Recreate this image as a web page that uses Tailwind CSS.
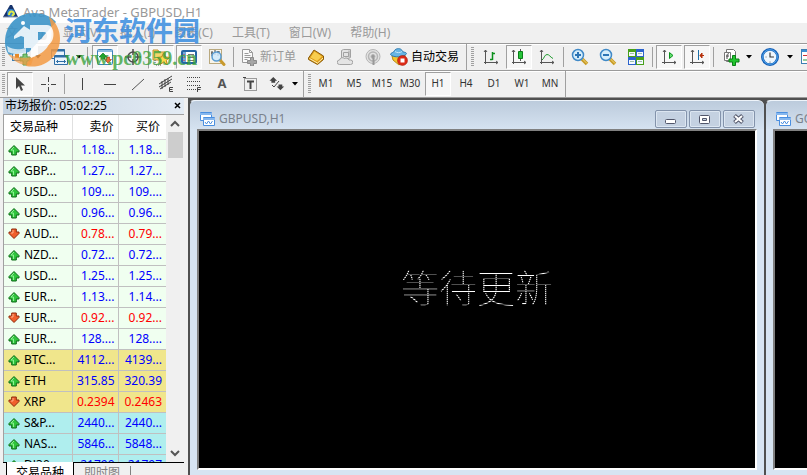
<!DOCTYPE html>
<html lang="zh-CN">

<head>
    <title>Ava MetaTrader - GBPUSD,H1</title>
    <meta charset="UTF-8">
    <meta name="viewport" content="width=device-width, initial-scale=1.0">
    <script src="https://cdn.jsdelivr.net/npm/@tailwindcss/browser@4"></script>
    <script type="text/javascript">
        const quotes = [
            ['EUR...', '1.18...', '1.18...', 'up', 'fx'],
            ['GBP...', '1.27...', '1.27...', 'up', 'fx'],
            ['USD...', '109....', '109....', 'up', 'fx'],
            ['USD...', '0.96...', '0.96...', 'up', 'fx'],
            ['AUD...', '0.78...', '0.79...', 'down', 'fx'],
            ['NZD...', '0.72...', '0.72...', 'up', 'fx'],
            ['USD...', '1.25...', '1.25...', 'up', 'fx'],
            ['EUR...', '1.13...', '1.14...', 'up', 'fx'],
            ['EUR...', '0.92...', '0.92...', 'down', 'fx'],
            ['EUR...', '128....', '128....', 'up', 'fx'],
            ['BTC...', '4112...', '4139...', 'up', 'crypto'],
            ['ETH', '315.85', '320.39', 'up', 'crypto'],
            ['XRP', '0.2394', '0.2463', 'down', 'crypto'],
            ['S&amp;P...', '2440...', '2440...', 'up', 'index'],
            ['NAS...', '5846...', '5848...', 'up', 'index'],
            ['DJ30...', '21790', '21797', 'up', 'index'],
        ]

        const rowColors = { fx: 'bg-[#f0fff0]', crypto: 'bg-[#f0e68c]', index: 'bg-[#afeeee]' }

        const arrows = {
            up: '<svg class="w-3 h-3" viewBox="0 0 12 12"><path d="M6 1.5 11 6.5V8H8.300v3H3.700V8H1V6.500Z" fill="#2fc43c" stroke="#0c6a16"/><path d="M6 3 3 6h2.500v4" fill="none" stroke="#8df093"/></svg>',
            down: '<svg class="w-3 h-3" viewBox="0 0 12 12"><path d="M6 10.500 1 5.500V4h2.700V1h4.600v3H11v1.500Z" fill="#f0602c" stroke="#8e2a0c"/><path d="M5 2v3H3" fill="none" stroke="#ffb08a"/></svg>'
        }

        window.onload = () => {
            document.getElementById('quotes').innerHTML = quotes.map((q) => `
                <tr class="h-[21px] border-b border-[#c0c0c0] ${rowColors[q[4]]}">
                    <td class="border-r border-[#c0c0c0] pl-1"><div class="flex items-center gap-1">${arrows[q[3]]}<span>${q[0]}</span></div></td>
                    <td class="border-r border-[#c0c0c0] pr-[3px] text-right ${q[3] === 'up' ? 'text-[#0000ff]' : 'text-[#ff0000]'}">${q[1]}</td>
                    <td class="pr-1 text-right ${q[3] === 'up' ? 'text-[#0000ff]' : 'text-[#ff0000]'}">${q[2]}</td>
                </tr>`).join('')
        }
    </script>
</head>

<body class="flex h-screen flex-col overflow-hidden bg-[#f0f0f0] font-['Noto_Sans','Noto_Sans_CJK_SC',sans-serif] text-xs text-black">

    <!-- title bar -->
    <header class="flex h-[23px] shrink-0 items-center gap-1 bg-white pl-[3px] text-[#999]">
        <svg class="h-4 w-4" viewBox="0 0 16 16">
            <path d="M7 1h2l6 12H0Z" fill="#17336b" />
            <circle cx="8" cy="9" r="4" fill="#2f7fc9" />
            <path d="M6 11c0-4 4-5 5-1l-2 2" fill="none" stroke="#dfe84a" stroke-width="2" />
            <path d="M0 13h15" stroke="#8a95b0" />
        </svg>
        <h1 class="text-[13px] leading-4">Ava MetaTrader - GBPUSD,H1</h1>
    </header>

    <!-- menu -->
    <nav class="flex h-5 shrink-0 items-center gap-[19px] whitespace-nowrap pl-1.5 text-[#9a9a9a]">
        <a href="#">文件(F)</a>
        <a href="#">显示(V)</a>
        <a href="#">插入(I)</a>
        <a href="#">图表(C)</a>
        <a href="#">工具(T)</a>
        <a href="#">窗口(W)</a>
        <a href="#">帮助(H)</a>
    </nav>

    <!-- standard toolbar -->
    <div class="flex h-[27px] shrink-0 items-center gap-0.5 overflow-hidden whitespace-nowrap border-t border-[#9a9a9a] pl-0.5 shadow-[inset_0_1px_0_#fff]">
        <span class="h-5 w-[3px] shrink-0 bg-[repeating-linear-gradient(#a0a0a0_0_1px,transparent_1px_2px)]"></span>
        <button aria-label="新图表" class="flex h-6 w-[35px] shrink-0 items-center justify-between pl-1">
            <svg class="h-5 w-5" viewBox="0 0 20 20">
                <rect x="1.500" y="3.500" width="14" height="10" fill="#e9f3fa" stroke="#3c7fb4" />
                <path d="M4 6h4v5H4z" fill="#e58a28" />
                <path d="M9 7h3v-3h4v3h3v4h-3v4h-4v-4H9z" transform="translate(0 3)" fill="#7cc576" stroke="#4b9b48" />
            </svg>
            <svg class="h-1 w-2" viewBox="0 0 8 4"><path d="M1 0h6L4 3.500z" /></svg>
        </button>
        <button aria-label="配置文件" class="ml-1 flex h-6 w-[35px] shrink-0 items-center justify-between pl-0.5">
            <svg class="h-[18px] w-[18px]" viewBox="0 0 18 18" fill="#eaf4fc" stroke="#2f6ea6">
                <path d="M1.500 1.500h13v9h-13z" /><path d="M1 2.500h14" stroke-width="2" />
                <path d="M4.500 7.500h13v9h-13z" /><path d="M4 8.500h14" stroke-width="2" />
                <path d="M6.500 13.500h9M8 12l-1.500 1.500L8 15M14 12l1.500 1.500L14 15" fill="none" />
            </svg>
            <svg class="h-1 w-2" viewBox="0 0 8 4"><path d="M1 0h6L4 3.500z" /></svg>
        </button>
        <span class="mx-0.5 h-5 w-px shrink-0 bg-[#a0a0a0]"></span>
        <button aria-label="市场报价" class="flex h-6 w-[26px] shrink-0 items-center justify-center border border-b-white border-r-white border-l-[#a0a0a0] border-t-[#a0a0a0] bg-[#f7f7f7]">
            <svg class="h-4 w-4" viewBox="0 0 16 16">
                <rect x=".5" y=".5" width="15" height="15" rx="1" fill="#fff" stroke="#3c83bd" />
                <path d="M1 1h14v2H1z" fill="#8dbde0" />
                <path d="M6 4l4 4H8v2H4V8H2z" fill="#1da52b" stroke="#0b6915" stroke-width=".6" />
                <path d="M11 14 7.500 10.500h2V8h3v2.500h2z" fill="#ee6a35" stroke="#9c300d" stroke-width=".6" />
            </svg>
        </button>
        <button aria-label="数据窗口" class="flex h-6 w-[26px] shrink-0 items-center justify-center">
            <svg class="h-4 w-4" viewBox="0 0 16 16" fill="none" stroke="#4c4c4c">
                <circle cx="8" cy="8" r="5" stroke-width="1.500" /><path d="M8 0v6M8 10v6M0 8h6M10 8h6" stroke-width="1.500" />
            </svg>
        </button>
        <button aria-label="导航" class="flex h-6 w-[26px] shrink-0 items-center justify-center border border-b-white border-r-white border-l-[#a0a0a0] border-t-[#a0a0a0] bg-[#f7f7f7]">
            <svg class="h-[18px] w-[18px]" viewBox="0 0 18 18">
                <path d="M1 2h5l1 2h6v8H1z" fill="#f5d66a" stroke="#c0902c" />
                <path d="M3 12v5h6" fill="none" stroke="#555" stroke-dasharray="1 1" />
                <path d="m11.500 5 1.800 4 4.200.4-3.200 2.900 1 4.200-3.800-2.200-3.800 2.200 1-4.200-3.200-2.900 4.200-.4z" fill="#ffd94a" stroke="#b78316" />
            </svg>
        </button>
        <button aria-label="终端" class="flex h-6 w-[26px] shrink-0 items-center justify-center border border-b-white border-r-white border-l-[#a0a0a0] border-t-[#a0a0a0] bg-[#f7f7f7]">
            <svg class="h-4 w-4" viewBox="0 0 16 16">
                <rect x="1" y="2" width="14" height="12" rx="1" fill="#fff" stroke="#2565a4" stroke-width="2" />
                <path d="M2 3h3v10H2z" fill="#72a8dc" /><path d="M7 5.500h6M7 8.500h6M7 11.500h6" stroke="#777" />
                <path d="M3 5v1M3 8v1M3 11v1" stroke="#d33" />
            </svg>
        </button>
        <button aria-label="策略测试" class="flex h-6 w-[26px] shrink-0 items-center justify-center">
            <svg class="h-[18px] w-[18px]" viewBox="0 0 18 18">
                <rect x="1.500" y="1.500" width="12" height="14" fill="#f8f4ea" stroke="#b9a97f" />
                <path d="M4 3v5M7 2v5M10 3v5M3 5h2M9 4h3" stroke="#444" />
                <path d="m12 12 4 4.500" stroke="#c89a2e" stroke-width="3" stroke-linecap="round" />
                <circle cx="8.500" cy="8.500" r="4.500" fill="#cfe9fb" fill-opacity=".85" stroke="#5a9cd2" stroke-width="1.500" />
            </svg>
        </button>
        <span class="mx-px h-5 w-px shrink-0 bg-[#a0a0a0]"></span>
        <button class="ml-0.5 flex h-6 w-[62px] shrink-0 items-center gap-[3px] pl-0.5 text-[#999]">
            <svg class="h-[18px] w-4" viewBox="0 0 16 18">
                <path d="M1.500 1.500h7l3 3v10h-10z" fill="#fafafa" stroke="#9a9a9a" />
                <path d="M8.500 1.500v3h3M3.500 5.500h4M3.500 7.500h6M3.500 9.500h6M3.500 11.500h3" fill="none" stroke="#9a9a9a" />
                <path d="M9.500 9.500h3v3h3v3h-3v2.500h-3v-2.500h-3v-3h3z" fill="#a6a6a6" stroke="#8a8a8a" />
            </svg>新订单</button>
        <button aria-label="MetaEditor" class="flex h-6 w-[26px] shrink-0 items-center justify-center">
            <svg class="h-4 w-4" viewBox="0 0 16 16">
                <path d="M0.500 9 6 1l9.500 6v3.500l-6 5-9-5z" fill="#dd9a15" stroke="#8a5c0a" />
                <path d="m1.500 9.500 8 4.500 5.500-5" fill="none" stroke="#fff2b8" /><path d="m2.500 8.500 4-6 7.500 5-5 4.500z" fill="#f8cd4e" />
            </svg>
        </button>
        <button aria-label="市场" class="ml-px flex h-6 w-[26px] shrink-0 items-center justify-center">
            <svg class="h-4 w-4" viewBox="0 0 16 16" fill="#e4e4e4" stroke="#a2a2a2">
                <path d="m4.500 1.500 2-1h7v8l-2 1h-7z" /><path d="M6.500 3.500h5v4h-5zM12 1.500v7" />
                <path d="M2.500 15.500a2 2 0 0 1 0-4.500 3 3 0 0 1 5-1.500 3 3 0 0 1 4.500 1.500h1.500a2 2 0 0 1 0 4.500z" />
            </svg>
        </button>
        <button aria-label="信号" class="flex h-6 w-[26px] shrink-0 items-center justify-center">
            <svg class="h-4 w-4" viewBox="0 0 16 16" fill="none" stroke="#b5b5b5">
                <circle cx="8" cy="7.500" r="7" fill="#e2e2e2" /><circle cx="8" cy="7.500" r="4.500" stroke-width="1.500" /><circle cx="8" cy="7.500" r="2" fill="#999" />
                <path d="M8.500 9v7" stroke="#999" stroke-width="2" />
            </svg>
        </button>
        <button class="ml-0.5 flex h-6 w-[74px] shrink-0 items-center gap-[3px]">
            <svg class="h-[18px] w-[18px]" viewBox="0 0 18 18">
                <path d="m2 8 13-1v5l-6 5-6-5z" fill="#f1c530" stroke="#b98c16" />
                <path d="M.500 6.500C1 4 4 5 4.500 2.500 6 0 11 0 12 2.500 12.500 5 16 3.500 16.500 5.500 15 9.500 3 10 .500 6.500Z" fill="#67b5e4" stroke="#2e7bb0" />
                <path d="M5 3.500c2 1.500 5 1.500 7 0" fill="none" stroke="#c5e6f8" />
                <circle cx="12.500" cy="12.500" r="5" fill="#dd2b17" stroke="#a11505" stroke-width=".5" /><path d="M10.500 10.500h4v4h-4z" fill="#fff" />
            </svg>自动交易</button>
        <span class="h-full w-px shrink-0 bg-[#a0a0a0]"></span>
        <span class="mx-0.5 h-5 w-[3px] shrink-0 bg-[repeating-linear-gradient(#a0a0a0_0_1px,transparent_1px_2px)]"></span>
        <button aria-label="柱状图" class="flex h-6 w-[26px] shrink-0 items-center justify-center">
            <svg class="h-4 w-4" viewBox="0 0 16 16" fill="none" stroke="#555">
                <path d="M2.500 1v14M1 3l1.500-2L4 3M1 13.500h14M13 12l2 1.500-2 1.500" /><path d="M9.500 3v8M7 10.500h2.500M9.500 4.500H12" stroke="#0b8f1c" stroke-width="1.500" />
            </svg>
        </button>
        <button aria-label="阴阳烛" class="flex h-6 w-[26px] shrink-0 items-center justify-center border border-b-white border-r-white border-l-[#a0a0a0] border-t-[#a0a0a0] bg-[#f7f7f7]">
            <svg class="h-4 w-4" viewBox="0 0 16 16" fill="none" stroke="#555">
                <path d="M2.500 1v14M1 3l1.500-2L4 3M1 13.500h14M13 12l2 1.500-2 1.500M9.500 0v12" /><path d="M7.500 2.500h4v7h-4z" fill="#26c43a" stroke="#0b7e19" />
            </svg>
        </button>
        <button aria-label="折线图" class="flex h-6 w-[26px] shrink-0 items-center justify-center">
            <svg class="h-4 w-4" viewBox="0 0 16 16" fill="none" stroke="#555">
                <path d="M2.500 1v14M1 3l1.500-2L4 3M1 13.500h14M13 12l2 1.500-2 1.500" /><path d="M3 11c2-1 2.500-5.500 5-5.500S11 8 14 9.500" stroke="#1c9a2b" />
            </svg>
        </button>
        <span class="mx-px h-5 w-px shrink-0 bg-[#a0a0a0]"></span>
        <button aria-label="放大" class="flex h-6 w-[26px] shrink-0 items-center justify-center">
            <svg class="h-[18px] w-[18px]" viewBox="0 0 18 18">
                <path d="m11 11 5 5" stroke="#c79a26" stroke-width="3.500" /><path d="m11.500 11 4.500 4.500" stroke="#f6dc7c" />
                <circle cx="7" cy="7" r="5.500" fill="#d5edfb" stroke="#4089c7" stroke-width="1.500" /><path d="M4 7h6M7 4v6" stroke="#2c74b5" stroke-width="2" />
            </svg>
        </button>
        <button aria-label="缩小" class="flex h-6 w-[26px] shrink-0 items-center justify-center">
            <svg class="h-[18px] w-[18px]" viewBox="0 0 18 18">
                <path d="m11 11 5 5" stroke="#c79a26" stroke-width="3.500" /><path d="m11.500 11 4.500 4.500" stroke="#f6dc7c" />
                <circle cx="7" cy="7" r="5.500" fill="#d5edfb" stroke="#4089c7" stroke-width="1.500" /><path d="M4 7h6" stroke="#2c74b5" stroke-width="2" />
            </svg>
        </button>
        <button aria-label="平铺窗口" class="flex h-6 w-[26px] shrink-0 items-center justify-center">
            <svg class="h-4 w-4" viewBox="0 0 16 16">
                <path d="M0 0h8v8H0zM8 8h8v8H8z" fill="#47a01a" /><path d="M8 0h8v8H8zM0 8h8v8H0z" fill="#2b63cd" />
                <path d="M1 3h6v4H1zM9 3h6v4H9zM1 11h6v4H1zM9 11h6v4H9z" fill="#f4f8ff" />
                <path d="M2 4.500h4M10 4.500h4M2 12.500h4M10 12.500h4" stroke="#9ec0ac" />
            </svg>
        </button>
        <span class="mx-px h-5 w-px shrink-0 bg-[#a0a0a0]"></span>
        <button aria-label="自动滚动" class="flex h-6 w-[26px] shrink-0 items-center justify-center border border-b-white border-r-white border-l-[#a0a0a0] border-t-[#a0a0a0] bg-[#f7f7f7]">
            <svg class="h-4 w-4" viewBox="0 0 16 16" fill="none" stroke="#555">
                <path d="M3.500 1v14M2 3l1.500-2L5 3M1 13.500h14M13 12l2 1.500-2 1.500" /><path d="M8.500 3.500v6l3.500-3z" fill="#5fe06d" stroke="#0b8f1c" />
            </svg>
        </button>
        <button aria-label="图表平移" class="flex h-6 w-[26px] shrink-0 items-center justify-center border border-b-white border-r-white border-l-[#a0a0a0] border-t-[#a0a0a0] bg-[#f7f7f7]">
            <svg class="h-4 w-4" viewBox="0 0 16 16" fill="none" stroke="#555">
                <path d="M3.500 1v14M2 3l1.500-2L5 3M1 13.500h14M13 12l2 1.500-2 1.500" /><path d="M9.500 1v10" stroke="#1b6fa8" /><path d="M11 6.500h4M13 4l-2 2.500L13 9z" fill="#c43b12" stroke="#b5300b" />
            </svg>
        </button>
        <span class="mx-px h-5 w-px shrink-0 bg-[#a0a0a0]"></span>
        <button aria-label="指标" class="ml-1 flex h-6 w-8 shrink-0 items-center justify-between pl-0.5">
            <svg class="h-[18px] w-[18px]" viewBox="0 0 18 18">
                <path d="M3.500 1.500h7l2 2v10h-9z" fill="#fff" stroke="#777" /><path d="M1.500 4.500h6v8h-6z" fill="#fff" stroke="#777" />
                <path d="M6 6c-2-1-2 1-2 5M3 8h3" fill="none" stroke="#444" />
                <path d="M9.500 7.500h3v3.500H16v3h-3.500v3.500h-3V14H6v-3h3.500z" fill="#22c52f" stroke="#0a7f17" />
            </svg>
            <svg class="h-1 w-2" viewBox="0 0 8 4"><path d="M1 0h6L4 3.500z" /></svg>
        </button>
        <button aria-label="时间周期" class="ml-1 flex h-6 w-[35px] shrink-0 items-center justify-between pl-0.5">
            <svg class="h-[18px] w-[18px]" viewBox="0 0 16 16">
                <circle cx="8" cy="8" r="6.800" fill="#eef6fd" stroke="#1761b8" stroke-width="2.400" /><circle cx="8" cy="8" r="6.500" fill="none" stroke="#58aef0" stroke-width=".8" />
                <path d="M8 4v4h3.500" fill="none" stroke="#333" /><path d="M8 12v1M4 8h1" stroke="#888" />
            </svg>
            <svg class="h-1 w-2" viewBox="0 0 8 4"><path d="M1 0h6L4 3.500z" /></svg>
        </button>
        <button aria-label="模板" class="ml-1 flex h-6 w-[26px] shrink-0 items-center pl-px">
            <svg class="h-4 w-4" viewBox="0 0 16 16">
                <rect x=".5" y=".5" width="15" height="14" fill="#fff" stroke="#3c7fb4" /><path d="M1 2h14" stroke="#3c8fd4" stroke-width="2" />
                <path d="M2 6.500h6" stroke="#c33" /><path d="M2 11h6" stroke="#2a9a3a" />
            </svg>
        </button>
    </div>

    <!-- drawing tools and periods -->
    <div class="flex h-[27px] shrink-0 items-center gap-0.5 overflow-hidden whitespace-nowrap border-t border-[#9a9a9a] pl-0.5 text-[10px] text-[#333] shadow-[inset_0_1px_0_#fff]">
        <span class="h-5 w-[3px] shrink-0 bg-[repeating-linear-gradient(#a0a0a0_0_1px,transparent_1px_2px)]"></span>
        <button aria-label="光标" class="flex h-6 w-[26px] shrink-0 items-center justify-center border border-b-white border-r-white border-l-[#a0a0a0] border-t-[#a0a0a0] bg-[#f7f7f7]">
            <svg class="h-4 w-4" viewBox="0 0 16 16"><path d="M4 1v12l3-3 2 5 2-1-2-4.500h4z" fill="#444" /></svg>
        </button>
        <button aria-label="十字准线" class="flex h-6 w-[26px] shrink-0 items-center justify-center">
            <svg class="h-4 w-4" viewBox="0 0 16 16"><path d="M8.500 1v5M8.500 11v5M1 8.500h5M11 8.500h5M8 8.500h1" stroke="#444" /></svg>
        </button>
        <span class="ml-px mr-0.5 h-5 w-px shrink-0 bg-[#a0a0a0]"></span>
        <button aria-label="垂直线" class="flex h-6 w-[26px] shrink-0 items-center justify-center">
            <svg class="h-4 w-4" viewBox="0 0 16 16"><path d="M8.500 2v12" stroke="#444" /></svg>
        </button>
        <button aria-label="水平线" class="flex h-6 w-[26px] shrink-0 items-center justify-center">
            <svg class="h-4 w-4" viewBox="0 0 16 16"><path d="M2 8.500h12" stroke="#444" /></svg>
        </button>
        <button aria-label="趋势线" class="flex h-6 w-[26px] shrink-0 items-center justify-center">
            <svg class="h-4 w-4" viewBox="0 0 16 16"><path d="M2 14 14 3" stroke="#555" /></svg>
        </button>
        <button aria-label="等距通道" class="flex h-6 w-[26px] shrink-0 items-center justify-center">
            <svg class="h-[18px] w-4" viewBox="0 0 16 18" fill="none" stroke="#444">
                <path d="m1 9 13-8M1 12l13-8M2 14l11-7M4 6v8M7 4v8M10 3v7" /><path d="M15 12.500h-3.500v4H15M11.500 14.500h3" />
            </svg>
        </button>
        <button aria-label="斐波纳契" class="flex h-6 w-[26px] shrink-0 items-center justify-center">
            <svg class="h-[18px] w-4" viewBox="0 0 16 18" fill="none" stroke="#444">
                <path d="M1 2.500h14M1 6.500h14M1 10.500h14M1 14.500h9" stroke-dasharray="1 1" /><path d="M15 12.500h-3.500V17M11.500 14.500h3" />
            </svg>
        </button>
        <button class="h-6 w-[26px] shrink-0 text-[13px] font-bold text-[#555]">A</button>
        <button aria-label="文字标签" class="flex h-6 w-[26px] shrink-0 items-center justify-center">
            <svg class="h-4 w-4" viewBox="0 0 16 16" fill="none" stroke="#444">
                <path d="M2.500 2.500h12v12h-12z" stroke-dasharray="1 1" /><path d="M5 5.500h7M8.500 5v8" stroke-width="2" /><path d="M1 1.500h3" />
            </svg>
        </button>
        <button aria-label="箭头" class="flex h-6 w-[34px] shrink-0 items-center justify-between pl-1">
            <svg class="h-4 w-4" viewBox="0 0 16 16" fill="#444">
                <path d="m4.500 1 4 4h-2v2h-4V5H.500zM12 15l-4-4h2V9h4v2h2z" transform="scale(.95)" /><path d="m3 9 2 2 5-6" fill="none" stroke="#444" />
            </svg>
            <svg class="h-1 w-2 shrink-0" viewBox="0 0 8 4"><path d="M1 0h6L4 3.500z" /></svg>
        </button>
        <span class="ml-0.5 h-full w-px shrink-0 bg-[#a0a0a0]"></span>
        <span class="ml-0.5 h-5 w-[3px] shrink-0 bg-[repeating-linear-gradient(#a0a0a0_0_1px,transparent_1px_2px)]"></span>
        <button class="h-6 w-[26px] shrink-0">M1</button>
        <button class="h-6 w-[26px] shrink-0">M5</button>
        <button class="h-6 w-[26px] shrink-0">M15</button>
        <button class="h-6 w-[26px] shrink-0">M30</button>
        <button class="h-6 w-[26px] shrink-0 border border-b-white border-r-white border-l-[#a0a0a0] border-t-[#a0a0a0] bg-[#f7f7f7]">H1</button>
        <button class="h-6 w-[26px] shrink-0">H4</button>
        <button class="h-6 w-[26px] shrink-0">D1</button>
        <button class="h-6 w-[26px] shrink-0">W1</button>
        <button class="h-6 w-[26px] shrink-0">MN</button>
        <span class="h-full w-px shrink-0 bg-[#a0a0a0]"></span>
    </div>

    <div class="flex min-h-0 flex-1 border-t border-[#9a9a9a]">
        <!-- market watch -->
        <aside class="flex w-[188px] shrink-0 flex-col pl-[3px] pr-1">
            <div class="flex h-4 shrink-0 items-center justify-between bg-linear-to-r from-[#c6d4e3] to-[#e3ebf4] pl-0.5 pr-0.5">
                <h2 class="leading-4">市场报价: 05:02:25</h2>
                <button aria-label="关闭" class="flex h-4 w-2 items-center justify-center">
                    <svg class="h-2 w-2" viewBox="0 0 8 8"><path d="m1 1 5 5M6 1 1 6" stroke="#000" stroke-width="1.500" /></svg>
                </button>
            </div>
            <div class="flex min-h-0 flex-1 border-l border-t border-[#a0a0a0]">
                <div class="min-w-0 flex-1 overflow-hidden">
                    <table class="w-full table-fixed border-collapse leading-4">
                        <thead>
                            <tr class="h-6 border-b border-[#d8d8d8] bg-white">
                                <th class="w-[68px] border-r border-[#e0e0e0] pl-1.5 text-left font-normal">交易品种</th>
                                <th class="w-[46px] border-r border-[#e0e0e0] pr-1 text-right font-normal">卖价</th>
                                <th class="pr-1.5 text-right font-normal">买价</th>
                            </tr>
                        </thead>
                        <tbody id="quotes"></tbody>
                    </table>
                </div>
                <div class="flex w-[18px] shrink-0 flex-col items-center">
                    <svg class="h-[17px] w-4 shrink-0" viewBox="0 0 16 17"><path d="m4 11 4-4 4 4" fill="none" stroke="#555" stroke-width="2" /></svg>
                    <span class="h-[26px] w-[15px] bg-[#cdcdcd]"></span>
                    <svg class="mt-auto h-[17px] w-4 shrink-0" viewBox="0 0 16 17"><path d="m4 6 4 4 4-4" fill="none" stroke="#555" stroke-width="2" /></svg>
                </div>
            </div>
            <div class="flex h-[13px] shrink-0 overflow-hidden whitespace-nowrap leading-4">
                <span class="w-[3px] border-t border-black"></span>
                <button class="h-5 border-x border-black bg-white px-[9px] pt-0.5 leading-4">交易品种</button>
                <button class="h-5 border-t border-black px-2.5 pt-px leading-4 text-[#808080]">即时图</button>
                <span class="flex-1 border-t border-black pt-[3px]"><span class="block h-4 w-px bg-[#808080]"></span></span>
            </div>
        </aside>

        <!-- chart windows -->
        <main class="flex min-w-0 flex-1 bg-[#505050] pt-0.5">
            <section class="flex min-w-0 flex-1 flex-col rounded-t-md border-l-2 border-t border-[#505050] border-t-[#eef4fa] bg-[#d7e4f2] px-[7px] pb-[5px]">
                <div class="-mx-[7px] flex h-7 shrink-0 items-center rounded-t-md bg-linear-to-b from-[#bccbdc] to-[#d5e2f0] px-[9px] pt-2 text-[#7a828c]">
                    <svg class="h-4 w-4" viewBox="0 0 16 16" fill="#fff" stroke="#4a8fe0">
                        <path d="M1.500 1.500h11v8h-11z" /><path d="M1 3h12" stroke-width="2" stroke="#86b7ee" /><path d="M4.500 6.500h11v8h-11z" /><path d="M4 8h12" stroke-width="2" stroke="#86b7ee" /><path d="m6 11 1.500 2 2-3 2 3 2-3" fill="none" />
                    </svg>
                    <h2 class="flex-1 pl-1 leading-4">GBPUSD,H1</h2>
                    <div class="flex gap-0.5">
                        <button aria-label="最小化" class="flex h-[18px] w-8 items-center justify-center rounded-[2px] border border-[#8393ab] bg-[#c4d1e1] shadow-[inset_0_0_0_1px_#dce6f1]">
                            <svg class="h-4 w-4" viewBox="0 0 16 16"><rect x="2.500" y="8.500" width="10" height="4" rx="1" fill="#fff" stroke="#51566a" /></svg>
                        </button>
                        <button aria-label="最大化" class="flex h-[18px] w-8 items-center justify-center rounded-[2px] border border-[#8393ab] bg-[#c4d1e1] shadow-[inset_0_0_0_1px_#dce6f1]">
                            <svg class="h-4 w-4" viewBox="0 0 16 16" stroke="#51566a"><rect x="2.500" y="4.500" width="10" height="8" rx="1" fill="#fff" /><path d="M5.500 7.500h4v2h-4z" fill="#c4d1e1" /></svg>
                        </button>
                        <button aria-label="关闭窗口" class="flex h-[18px] w-8 items-center justify-center rounded-[2px] border border-[#8393ab] bg-[#c4d1e1] shadow-[inset_0_0_0_1px_#dce6f1]">
                            <svg class="h-4 w-4" viewBox="0 0 16 16"><path d="m3.500 4.500 8 7M11.500 4.500l-8 7" stroke="#51566a" stroke-width="4" /><path d="m4 5 7 6M11 5l-7 6" stroke="#fff" stroke-width="2" /></svg>
                        </button>
                    </div>
                </div>
                <div class="flex flex-1 items-center justify-center border-2 border-b-white border-l-[#808080] border-r-white border-t-[#808080] bg-black">
                    <p class="bg-[repeating-linear-gradient(#fff_0_1px,#ffffff50_1px_2px)] bg-clip-text pb-7 font-['Noto_Sans_CJK_SC',sans-serif] text-[38px] font-thin leading-[38px] text-transparent">等待更新</p>
                </div>
            </section>
            <section class="flex w-[43px] shrink-0 flex-col overflow-hidden rounded-tl-md border-l-2 border-t border-[#505050] border-t-[#eef4fa] bg-[#d7e4f2] pb-[5px] pl-[7px]">
                <div class="-ml-[7px] flex h-7 shrink-0 items-center rounded-tl-md bg-linear-to-b from-[#bccbdc] to-[#d5e2f0] pl-[9px] pt-2 text-[#7a828c]">
                    <svg class="h-4 w-4 shrink-0" viewBox="0 0 16 16" fill="#fff" stroke="#4a8fe0">
                        <path d="M1.500 1.500h11v8h-11z" /><path d="M1 3h12" stroke-width="2" stroke="#86b7ee" /><path d="M4.500 6.500h11v8h-11z" /><path d="M4 8h12" stroke-width="2" stroke="#86b7ee" /><path d="m6 11 1.500 2 2-3 2 3 2-3" fill="none" />
                    </svg>
                    <h2 class="pl-1 leading-4">GOLD</h2>
                </div>
                <div class="flex-1 border-b-2 border-l-2 border-t-2 border-b-white border-l-[#808080] border-t-[#808080] bg-black"></div>
            </section>
        </main>
    </div>

    <!-- site watermark -->
    <div class="pointer-events-none absolute left-1 top-3 flex items-start whitespace-nowrap">
        <svg class="h-14 w-[60px]" viewBox="0 0 60 56">
            <path d="M1 30C1 12 14 1 30 1c10 0 18 4 22 9L25 40 5 43C2 39 1 35 1 30Z" fill="#3b93c8" fill-opacity=".9" />
            <path d="M45 5c12 8 15 27 5 39-7 9-18 12-28 10 2-5 4-8 9-10 13-4 21-17 14-39Z" fill="#f39a43" fill-opacity=".85" />
            <path d="M4 42c6 8 14 12 23 11l3-9c-8 3-17 2-26-2Z" fill="#f39a43" fill-opacity=".7" />
            <path d="M10 24 20 14l8 5v17h-8V25l-3-1-7 3ZM26 13h17c9 0 9 20-2 21h-7v9l-7 3V20h7v8h6c4 0 4-8 0-8H26Z" fill="#fff" fill-opacity=".85" />
            <path d="M3 34c6 4 12 4 19 2v5c-8 2-14 1-18-1Z" fill="#fff" fill-opacity=".7" />
            <circle cx="19" cy="11" r="2" fill="#fff" />
        </svg>
        <div class="pl-px">
            <p class="font-['Noto_Sans_CJK_SC',sans-serif] text-[27px] font-bold leading-9 text-[#3d8fe0]/90">河东软件园</p>
            <p class="font-['Liberation_Serif',serif] text-xl font-bold leading-5 text-[#3aa23c]/80">www.pc0359.cn</p>
        </div>
    </div>
</body>

</html>
